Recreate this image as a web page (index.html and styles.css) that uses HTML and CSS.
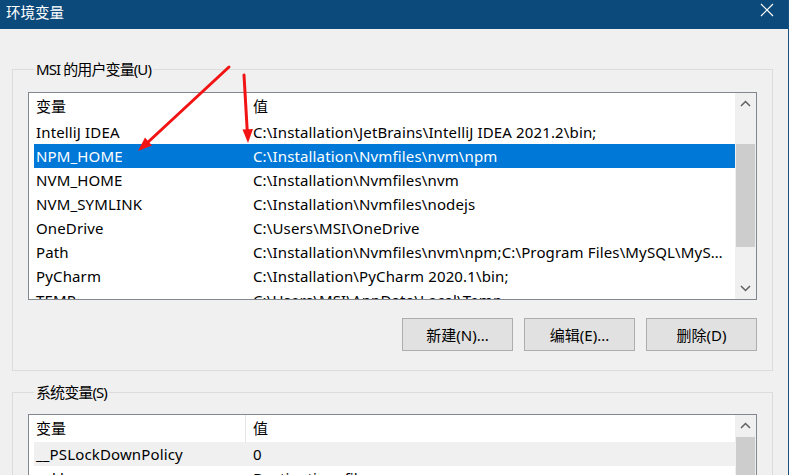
FILE: index.html
```html
<!DOCTYPE html>
<html lang="zh-CN">
<head>
<meta charset="utf-8">
<title>环境变量</title>
<link rel="stylesheet" href="styles.css">
</head>
<body>
<div class="window">
  <div class="titlebar">
    <span class="title">环境变量</span>
    <span class="close">
      <svg width="14" height="14" viewBox="0 0 14 14"><path d="M1 1 L13 13 M13 1 L1 13" stroke="#fff" stroke-width="1.2" fill="none"/></svg>
    </span>
  </div>
  <div class="content">
    <fieldset class="group user">
      <legend>MSI 的用户变量(U)</legend>
      <div class="list">
        <div class="list-main">
          <div class="row head"><div class="c1">变量</div><div class="c2">值</div></div>
          <div class="row"><div class="c1">IntelliJ IDEA</div><div class="c2">C:\Installation\JetBrains\IntelliJ IDEA 2021.2\bin;</div></div>
          <div class="row selected"><div class="c1">NPM_HOME</div><div class="c2">C:\Installation\Nvmfiles\nvm\npm</div></div>
          <div class="row"><div class="c1">NVM_HOME</div><div class="c2">C:\Installation\Nvmfiles\nvm</div></div>
          <div class="row"><div class="c1">NVM_SYMLINK</div><div class="c2">C:\Installation\Nvmfiles\nodejs</div></div>
          <div class="row"><div class="c1">OneDrive</div><div class="c2">C:\Users\MSI\OneDrive</div></div>
          <div class="row"><div class="c1">Path</div><div class="c2 path">C:\Installation\Nvmfiles\nvm\npm;C:\Program Files\MySQL\MySQL Server 8.0\bin;</div></div>
          <div class="row"><div class="c1">PyCharm</div><div class="c2">C:\Installation\PyCharm 2020.1\bin;</div></div>
          <div class="row"><div class="c1">TEMP</div><div class="c2">C:\Users\MSI\AppData\Local\Temp</div></div>
        </div>
        <div class="scrollbar">
          <div class="sb-btn"><svg width="11" height="7" viewBox="0 0 11 7"><path d="M1 6 L5.5 1.5 L10 6" stroke="#606060" stroke-width="1.5" fill="none"/></svg></div>
          <div class="sb-track"><div class="thumb user-thumb"></div></div>
          <div class="sb-btn"><svg width="11" height="7" viewBox="0 0 11 7"><path d="M1 1 L5.5 5.5 L10 1" stroke="#606060" stroke-width="1.5" fill="none"/></svg></div>
        </div>
      </div>
      <div class="buttons">
        <button class="btn">新建(N)...</button>
        <button class="btn">编辑(E)...</button>
        <button class="btn">删除(D)</button>
      </div>
    </fieldset>
    <fieldset class="group sys">
      <legend>系统变量(S)</legend>
      <div class="list sys-list">
        <div class="list-main">
          <div class="row head split"><div class="c1">变量</div><div class="c2">值</div></div>
          <div class="row inactive"><div class="c1">__PSLockDownPolicy</div><div class="c2">0</div></div>
          <div class="row"><div class="c1">asl.log</div><div class="c2">Destination=file</div></div>
          <div class="row"><div class="c1">ComSpec</div><div class="c2">C:\WINDOWS\system32\cmd.exe</div></div>
        </div>
        <div class="scrollbar">
          <div class="sb-btn"><svg width="11" height="7" viewBox="0 0 11 7"><path d="M1 6 L5.5 1.5 L10 6" stroke="#606060" stroke-width="1.5" fill="none"/></svg></div>
          <div class="sb-track"><div class="thumb sys-thumb"></div></div>
        </div>
      </div>
    </fieldset>
  </div>
  <svg class="annot" width="789" height="475" viewBox="0 0 789 475">
    <path d="M229 67 L146 144" stroke="#f21414" stroke-width="3" fill="none" stroke-linecap="round"/>
    <polygon points="138,151 152,145.5 145,137.5" fill="#f21414"/>
    <path d="M244 75 L247.3 132" stroke="#f21414" stroke-width="3" fill="none" stroke-linecap="round"/>
    <polygon points="248,143 253,129 242.5,129.6" fill="#f21414"/>
  </svg>
</div>
</body>
</html>
```

FILE: styles.css
```css
* { box-sizing: border-box; }
html, body {
  margin: 0;
  padding: 0;
  background: #f0f0f0;
  overflow: hidden;
}
body {
  width: 789px;
  height: 475px;
  font-family: "Noto Sans", "Noto Sans CJK SC", sans-serif;
  font-size: 15px;
  color: #000;
}
.window {
  position: relative;
  width: 789px;
  height: 475px;
  border-right: 1px solid #17507f;
  overflow: hidden;
}
.titlebar {
  height: 29px;
  background: #0c4a7c;
  display: flex;
  align-items: flex-start;
  justify-content: space-between;
  color: #fff;
}
.title {
  font-family: "Noto Sans CJK SC", sans-serif;
  font-size: 14.5px;
  line-height: 24px;
  padding-left: 6px;
}
.close {
  display: flex;
  padding: 3px 14px 0 0;
}
.content {
  padding: 30px 0 0 12px;
}
.group {
  margin: 0;
  width: 761px;
  border: 1px solid #dcdcdc;
  padding: 12px 15px 19px 15px;
  min-width: 0;
}
.group legend {
  margin-left: 6px;
  padding: 0 2px;
  line-height: 21px;
  font-size: 15px;
  letter-spacing: -0.9px;
}
.group.sys {
  margin-top: 11px;
  padding-top: 11px;
}
.list {
  height: 208px;
  border: 1px solid #828790;
  background: #fff;
  display: flex;
  overflow: hidden;
}
.list-main {
  flex: 1;
  padding-left: 5px;
  overflow: hidden;
}
.row {
  display: grid;
  grid-template-columns: 212px 1fr;
  height: 24px;
  line-height: 24px;
  white-space: nowrap;
  letter-spacing: 0.14px;
}
.row .c1 { padding-left: 2px; overflow: hidden; }
.row .c2 {
  padding-left: 7px;
  overflow: hidden;
  text-overflow: ellipsis;
}
.row .c2.path { padding-right: 4px; }
.row.head {
  height: 27px;
  line-height: 27px;
  border-right: 1px solid #e5e5e5;
  margin-right: -1px;
  letter-spacing: 0;
}
.row.head.split .c1 { border-right: 1px solid #e5e5e5; }
.row.selected {
  background: #0078d7;
  color: #fff;
}
.row.inactive {
  background: #f0f0f0;
}
.scrollbar {
  width: 21px;
  background: #f0f0f0;
  display: flex;
  flex-direction: column;
}
.sb-btn {
  height: 21px;
  display: flex;
  align-items: center;
  justify-content: center;
  flex: none;
}
.sb-track {
  flex: 1;
  padding: 0 1px;
}
.thumb {
  background: #cdcdcd;
}
.user-thumb {
  margin-top: 30px;
  height: 103px;
}
.sys-thumb {
  margin-top: 1px;
  height: 200px;
}
.buttons {
  display: flex;
  justify-content: flex-end;
  gap: 11px;
  margin-top: 18px;
}
.btn {
  width: 111px;
  height: 33px;
  background: #e1e1e1;
  border: 1px solid #adadad;
  font-family: "Noto Sans", "Noto Sans CJK SC", sans-serif;
  font-size: 15px;
  color: #000;
  padding: 0;
}
.annot {
  position: absolute;
  left: 0;
  top: 0;
  pointer-events: none;
}
```
